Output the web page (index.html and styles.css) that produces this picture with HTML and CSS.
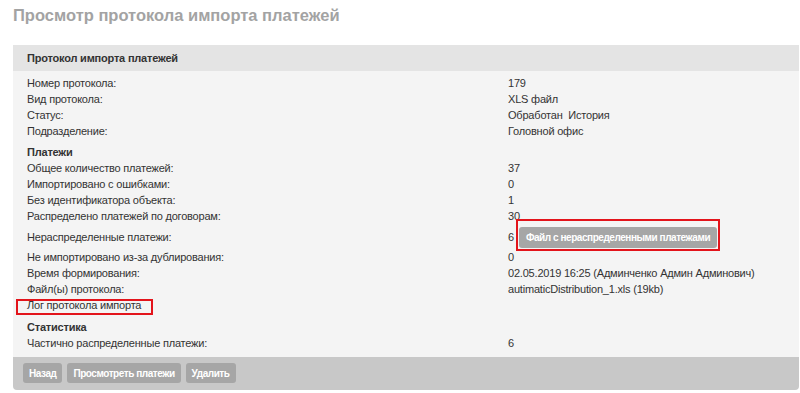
FILE: index.html
```html
<!DOCTYPE html>
<html>

<head>
    <meta charset="UTF-8">
    <title>Просмотр протокола импорта платежей</title>
    <link rel="stylesheet" href="styles.css">
</head>

<body>
    <h1 class="page-title">Просмотр протокола импорта платежей</h1>

    <div class="panel">
        <div class="panel-header">Протокол импорта платежей</div>

        <div class="panel-body">
            <div class="row"><span>Номер протокола:</span><span>179</span></div>
            <div class="row"><span>Вид протокола:</span><span>XLS файл</span></div>
            <div class="row"><span>Статус:</span><span>Обработан &nbsp;История</span></div>
            <div class="row"><span>Подразделение:</span><span>Головной офис</span></div>

            <div class="section-title">Платежи</div>
            <div class="row"><span>Общее количество платежей:</span><span>37</span></div>
            <div class="row"><span>Импортировано с ошибками:</span><span>0</span></div>
            <div class="row"><span>Без идентификатора объекта:</span><span>1</span></div>
            <div class="row"><span>Распределено платежей по договорам:</span><span>30</span></div>
            <div class="row row-button">
                <span>Нераспределенные платежи:</span>
                <span class="value-with-button">6
                    <span class="marked marked-file">
                        <button class="btn">Файл с нераспределенными платежами</button>
                    </span>
                </span>
            </div>
            <div class="row"><span>Не импортировано из-за дублирования:</span><span>0</span></div>
            <div class="row"><span>Время формирования:</span><span>02.05.2019 16:25 (Админченко Админ Админович)</span></div>
            <div class="row"><span>Файл(ы) протокола:</span><span>autimaticDistribution_1.xls (19kb)</span></div>
            <div class="row"><span class="marked marked-log">Лог протокола импорта</span><span></span></div>

            <div class="section-title section-stats">Статистика</div>
            <div class="row"><span>Частично распределенные платежи:</span><span>6</span></div>
        </div>

        <div class="panel-footer">
            <button class="btn">Назад</button>
            <button class="btn">Просмотреть платежи</button>
            <button class="btn">Удалить</button>
        </div>
    </div>
</body>

</html>
```

FILE: styles.css
```css
body {
    font-family: "Liberation Sans", Arial, sans-serif;
    font-size: 11px;
    letter-spacing: -0.2px;
    color: #333;
    background-color: #fff;
    margin: 0;
    padding: 0;
}

.page-title {
    font-size: 16.5px;
    font-weight: bold;
    letter-spacing: 0;
    color: #a3a3a3;
    margin: 0;
    padding: 6px 0 0 13px;
    height: 45px;
    box-sizing: border-box;
}

.panel {
    margin-left: 13px;
    margin-right: 1px;
    border-radius: 0 0 4px 4px;
    overflow: hidden;
}

.panel-header {
    background-color: #e4e4e4;
    font-weight: bold;
    height: 26px;
    line-height: 26px;
    padding-left: 14px;
}

.panel-body {
    background-color: #f4f4f4;
    padding: 4px 14px 6px 14px;
}

.row {
    display: grid;
    grid-template-columns: 481px 1fr;
    line-height: 16px;
    align-items: center;
    white-space: nowrap;
}

.row-button {
    height: 25px;
}

.section-title {
    font-weight: bold;
    line-height: 16px;
    margin-top: 5px;
}

.section-stats {
    margin-top: 6px;
}

.value-with-button {
    display: flex;
    align-items: center;
}

.marked {
    position: relative;
}

.marked::after {
    content: "";
    position: absolute;
    border: 2px solid #e3141b;
    pointer-events: none;
}

.marked-file {
    margin-left: 5px;
    margin-top: 2px;
}

.marked-file::after {
    left: -3px;
    right: -3px;
    top: -8px;
    bottom: -3px;
}

.marked-log::after {
    left: -11px;
    width: 133px;
    top: 2px;
    bottom: -2px;
}

.btn {
    font-family: "Liberation Sans", Arial, sans-serif;
    font-size: 10px;
    font-weight: bold;
    letter-spacing: -0.45px;
    color: #fff;
    background-color: #a6a6a6;
    border: none;
    border-radius: 3px;
    height: 20px;
    padding: 0 6px;
    cursor: pointer;
}

.marked-file .btn {
    height: 21px;
    padding: 0 7px;
}

.panel-footer {
    background-color: #c8c8c8;
    height: 33px;
    box-sizing: border-box;
    padding: 6px 0 0 10px;
    display: flex;
    align-items: flex-start;
    gap: 5px;
}
```
